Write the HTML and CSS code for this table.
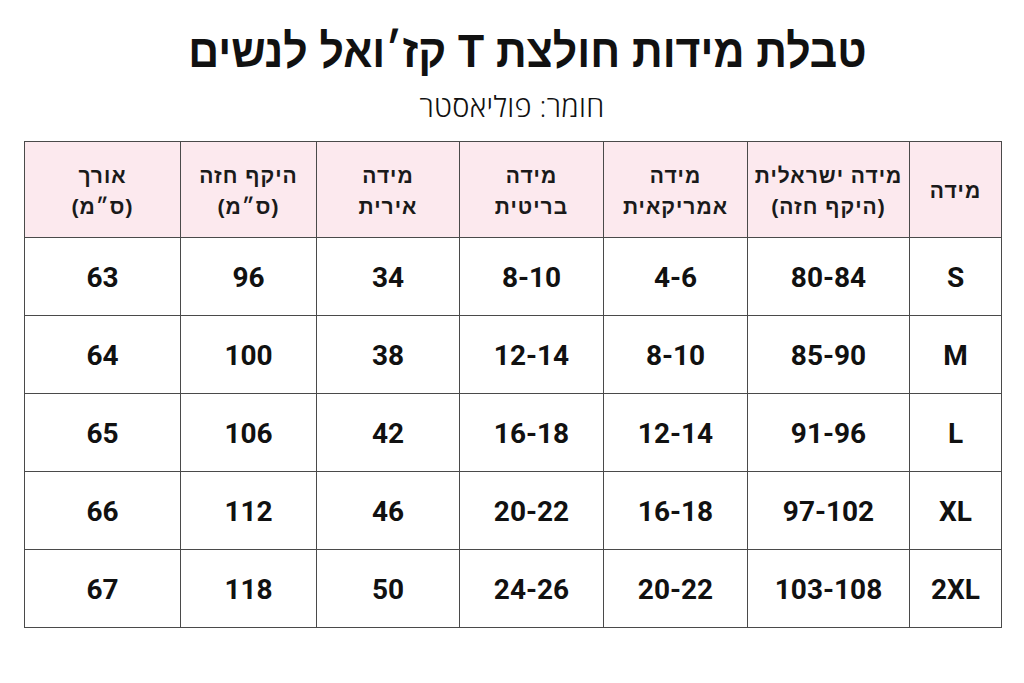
FILE: index.html
```html
<!DOCTYPE html>
<html lang="he" dir="rtl">
<head>
<meta charset="utf-8">
<link rel="stylesheet" href="styles.css">
</head>
<body>
<div class="page">
  <h1 class="title">טבלת מידות חולצת T קז׳ואל לנשים</h1>
  <p class="subtitle">חומר: פוליאסטר</p>
  <table class="sizes">
    <colgroup>
      <col class="c1"><col class="c2"><col class="c3"><col class="c4"><col class="c5"><col class="c6"><col class="c7">
    </colgroup>
    <thead>
      <tr>
        <th>מידה</th>
        <th>מידה ישראלית<br>(היקף חזה)</th>
        <th>מידה<br>אמריקאית</th>
        <th>מידה<br>בריטית</th>
        <th>מידה<br>אירית</th>
        <th>היקף חזה<br>(ס״מ)</th>
        <th>אורך<br>(ס״מ)</th>
      </tr>
    </thead>
    <tbody>
      <tr><td>S</td><td>80-84</td><td>4-6</td><td>8-10</td><td>34</td><td>96</td><td>63</td></tr>
      <tr><td>M</td><td>85-90</td><td>8-10</td><td>12-14</td><td>38</td><td>100</td><td>64</td></tr>
      <tr><td>L</td><td>91-96</td><td>12-14</td><td>16-18</td><td>42</td><td>106</td><td>65</td></tr>
      <tr><td>XL</td><td>97-102</td><td>16-18</td><td>20-22</td><td>46</td><td>112</td><td>66</td></tr>
      <tr><td>2XL</td><td>103-108</td><td>20-22</td><td>24-26</td><td>50</td><td>118</td><td>67</td></tr>
    </tbody>
  </table>
</div>
</body>
</html>
```
FILE: styles.css
```css
html, body {
  margin: 0;
  padding: 0;
  background: #ffffff;
}
.page {
  width: 1024px;
  height: 683px;
  padding-top: 23px;
  box-sizing: border-box;
  color: #111;
}
.title {
  margin: 0;
  text-align: center;
  font-family: "Liberation Sans", "DejaVu Sans", sans-serif;
  font-weight: 700;
  font-size: 47px;
  line-height: 56px;
  transform: scaleX(0.91);
  padding-left: 34px;
}
.subtitle {
  margin: 12px 0 0;
  text-align: center;
  font-family: "Open Sans", "DejaVu Sans", sans-serif;
  font-weight: 300;
  font-size: 29px;
  line-height: 30px;
  letter-spacing: 0.3px;
}
.sizes {
  margin: 20px 22px 0 0;
  width: 977px;
  table-layout: fixed;
  border-collapse: collapse;
  border: 1.5px solid #3a3a3a;
}
.c1 { width: 92px; }
.c2 { width: 162px; }
.c3 { width: 144px; }
.c4 { width: 144px; }
.c5 { width: 143px; }
.c6 { width: 136px; }
.c7 { width: 156px; }
.sizes th, .sizes td {
  border: 1.2px solid #4a4a4a;
  text-align: center;
  vertical-align: middle;
  padding: 0;
}
.sizes th {
  background: #fce9ee;
  height: 93px;
  font-family: "Liberation Sans", "DejaVu Sans", sans-serif;
  font-weight: 700;
  font-size: 21px;
  line-height: 31px;
  letter-spacing: 1px;
  color: #1a1a1a;
  padding-top: 2px;
}
.sizes td {
  height: 75px;
  font-family: Roboto, "Liberation Sans", sans-serif;
  font-weight: 700;
  font-size: 28px;
  color: #111;
  padding-top: 2px;
}
```
